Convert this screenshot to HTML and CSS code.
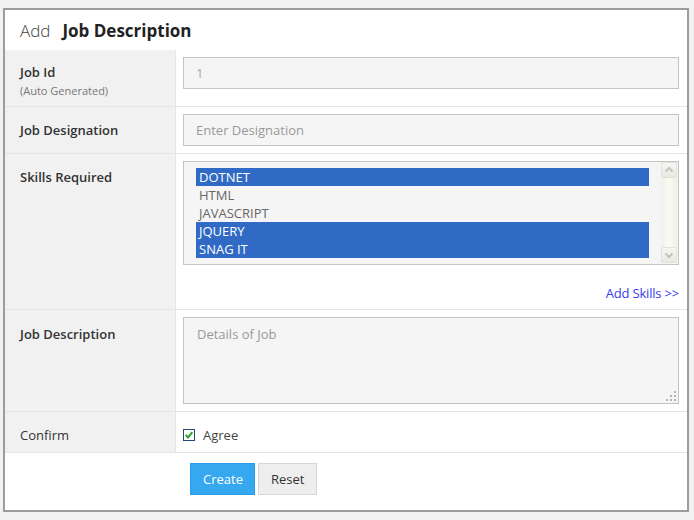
FILE: index.html
```
<!DOCTYPE html>
<html>
<head>
<meta charset="utf-8">
<link rel="stylesheet" href="styles.css">
</head>
<body>
<div class="card">
  <div class="head"><span class="add">Add</span><span class="title">Job Description</span></div>

  <div class="row">
    <div class="lbl lbl-id"><div class="name">Job Id</div><div class="sub">(Auto Generated)</div></div>
    <div class="field"><div class="input ro">1</div></div>
  </div>

  <div class="row">
    <div class="lbl"><div class="name">Job Designation</div></div>
    <div class="field"><div class="input ph">Enter Designation</div></div>
  </div>

  <div class="row">
    <div class="lbl"><div class="name">Skills Required</div></div>
    <div class="field">
      <div class="listbox">
        <ul class="opts">
          <li class="sel">DOTNET</li>
          <li>HTML</li>
          <li>JAVASCRIPT</li>
          <li class="sel">JQUERY</li>
          <li class="sel">SNAG IT</li>
        </ul>
        <div class="sbar">
          <div class="sbtn"><svg width="14" height="14" viewBox="0 0 14 14"><path d="M3.5 8.5 L7 5 L10.5 8.5" fill="none" stroke="#c4c4bc" stroke-width="2"/></svg></div>
          <div class="strack"></div>
          <div class="sbtn"><svg width="14" height="14" viewBox="0 0 14 14"><path d="M3.5 5.5 L7 9 L10.5 5.5" fill="none" stroke="#c4c4bc" stroke-width="2"/></svg></div>
        </div>
      </div>
      <div class="more"><a class="addlink">Add Skills &gt;&gt;</a></div>
    </div>
  </div>

  <div class="row">
    <div class="lbl lbl-desc"><div class="name">Job Description</div></div>
    <div class="field">
      <div class="tawrap">
        <div class="textarea ph">Details of Job</div>
        <svg class="grip" width="10" height="10" viewBox="0 0 10 10">
          <rect x="8" y="0" width="2" height="2" fill="#b5b5b5"/>
          <rect x="4" y="4" width="2" height="2" fill="#b5b5b5"/>
          <rect x="8" y="4" width="2" height="2" fill="#b5b5b5"/>
          <rect x="0" y="8" width="2" height="2" fill="#b5b5b5"/>
          <rect x="4" y="8" width="2" height="2" fill="#b5b5b5"/>
          <rect x="8" y="8" width="2" height="2" fill="#b5b5b5"/>
        </svg>
      </div>
    </div>
  </div>

  <div class="row">
    <div class="lbl lbl-confirm"><div class="name plain">Confirm</div></div>
    <div class="field check">
      <span class="cb"><svg width="10" height="10" viewBox="0 0 10 10"><path d="M1.8 5 L4 7.4 L8.4 2.2" fill="none" stroke="#2e9e2e" stroke-width="2"/></svg></span>
      <span class="agree">Agree</span>
    </div>
  </div>

  <div class="actions">
    <div></div>
    <div class="btns"><button class="btn create">Create</button><button class="btn reset">Reset</button></div>
  </div>
</div>
</body>
</html>
```
FILE: styles.css
```
html, body {
  margin: 0;
  padding: 0;
  background: #f1f1f1;
}
body {
  font-family: "Open Sans", "Liberation Sans", sans-serif;
  font-size: 13px;
  color: #333;
}
.card {
  box-sizing: border-box;
  width: 686px;
  height: 504px;
  margin: 8px 0 0 3px;
  border: 2px solid #9c9c9c;
  background: #fff;
}
.head {
  height: 40px;
  display: flex;
  align-items: center;
  padding-left: 15px;
  font-size: 17px;
}
.add {
  font-weight: 300;
  color: #444;
  margin-right: 12px;
}
.title {
  font-weight: 700;
  color: #222;
}
.row {
  display: grid;
  grid-template-columns: 171px 1fr;
  border-bottom: 1px solid #e4e4e4;
}
.lbl {
  box-sizing: border-box;
  background: #f1f1f1;
  border-right: 1px solid #e6e6e6;
  padding: 13px 15px 8px;
}
.lbl-id {
  padding: 12px 15px 8px;
}
.lbl-desc {
  padding-top: 14px;
}
.lbl-confirm {
  padding: 13px 15px 7px;
}
.name {
  font-weight: 600;
  line-height: 20px;
  color: #333;
}
.name.plain {
  font-weight: 400;
}
.sub {
  font-size: 11px;
  line-height: 16px;
  padding-top: 1px;
  margin-bottom: -1px;
  color: #777;
}
.field {
  padding: 7px 8px 7px 7px;
}
.input {
  box-sizing: border-box;
  height: 32px;
  border: 1px solid #c3c3c3;
  background: #f5f5f5;
  padding: 0 12px;
  line-height: 30px;
}
.ro {
  color: #a0aab8;
}
.ph {
  color: #999;
}
.listbox {
  box-sizing: border-box;
  height: 104px;
  border: 1px solid #c3c3c3;
  background: #f5f5f5;
  display: flex;
  padding-left: 12px;
}
.opts {
  list-style: none;
  margin: 0;
  padding: 6px 0;
  flex: 1;
  margin-right: 12px;
}
.opts li {
  height: 18px;
  line-height: 18px;
  padding-left: 3px;
  color: #666;
}
.opts li.sel {
  background: #316ac5;
  color: #fff;
}
.sbar {
  width: 16px;
  margin: 0 1px 1px 0;
  display: flex;
  flex-direction: column;
  background: linear-gradient(to right, #f0f0e6, #fbfbf6 50%, #efefe4);
}
.sbtn {
  box-sizing: border-box;
  height: 16px;
  border: 1px solid #e2e2da;
  border-radius: 2px;
  background: linear-gradient(#f6f6f2, #e9e9e2);
  display: flex;
  align-items: center;
  justify-content: center;
}
.strack {
  flex: 1;
}
.more {
  text-align: right;
  padding-top: 20px;
  padding-bottom: 1px;
  line-height: 16px;
}
.addlink {
  color: #3a3aee;
  text-decoration: none;
  letter-spacing: -0.2px;
}
.tawrap {
  position: relative;
}
.textarea {
  box-sizing: border-box;
  height: 87px;
  border: 1px solid #c3c3c3;
  background: #f5f5f5;
  padding: 7px 13px;
  line-height: 18px;
}
.grip {
  position: absolute;
  right: 3px;
  bottom: 3px;
}
.check {
  display: flex;
  align-items: center;
  padding: 10px 8px 4px 7px;
  height: 26px;
}
.cb {
  box-sizing: border-box;
  width: 12px;
  height: 12px;
  border: 1px solid #1f4a78;
  background: #fff;
  display: flex;
  align-items: center;
  justify-content: center;
  margin-right: 8px;
}
.agree {
  color: #444;
}
.actions {
  display: grid;
  grid-template-columns: 171px 1fr;
}
.btns {
  padding: 10px 14px;
  display: flex;
  gap: 3px;
}
.btn {
  box-sizing: border-box;
  height: 32px;
  font-family: "Open Sans", "Liberation Sans", sans-serif;
  font-size: 13px;
  padding: 0 12px;
  cursor: pointer;
}
.create {
  width: 65px;
  background: #35a8f0;
  border: 1px solid #2a9de6;
  color: #fff;
}
.reset {
  width: 59px;
  background: #eeeeee;
  border: 1px solid #d6d6d6;
  color: #333;
}
```
